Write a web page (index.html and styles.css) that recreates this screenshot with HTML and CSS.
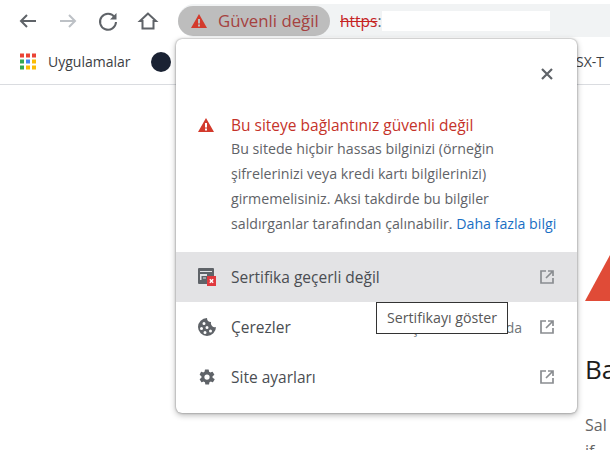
FILE: index.html
```html
<!DOCTYPE html>
<html lang="tr">
<head>
<meta charset="utf-8">
<title>Güvenli değil</title>
<link rel="stylesheet" href="styles.css">
</head>
<body>
<div class="toolbar">
  <div class="nav">
    <svg class="nav-icon" viewBox="0 0 24 24"><path class="st" d="M20 12H5M11 6l-6 6 6 6"/></svg>
    <svg class="nav-icon" viewBox="0 0 24 24"><path class="st dim" d="M4 12h15M13 6l6 6-6 6"/></svg>
    <svg class="nav-icon" viewBox="0 0 24 24"><path class="st" d="M18.600 8.200A8 8 0 1 0 20 13"/><path class="fill" d="M20.500 4v6.500H14z"/></svg>
    <svg class="nav-icon" viewBox="0 0 24 24"><path class="st" d="M12 4.500 4 12h2.500v7.500h11V12H20z"/></svg>
  </div>
  <div class="omnibox">
    <div class="chip">
      <svg class="warn" viewBox="0 0 16 14"><path class="warn-fill" fill-rule="evenodd" d="M8 0 16 14H0zM7 5v4.500h2V5zM7 10.500v2h2v-2z"/></svg>
      <span>Güvenli değil</span>
    </div>
    <div class="url"><s class="scheme">https</s><span class="colon">:</span><span class="redact"></span></div>
  </div>
</div>
<div class="bookmarks">
  <svg class="apps" viewBox="0 0 16 16">
    <rect class="r" x="0" y="0" width="4" height="4"/><rect class="r" x="6" y="0" width="4" height="4"/><rect class="r" x="12" y="0" width="4" height="4"/>
    <rect class="g" x="0" y="6" width="4" height="4"/><rect class="b" x="6" y="6" width="4" height="4"/><rect class="y" x="12" y="6" width="4" height="4"/>
    <rect class="g" x="0" y="12" width="4" height="4"/><rect class="y" x="6" y="12" width="4" height="4"/><rect class="y" x="12" y="12" width="4" height="4"/>
  </svg>
  <span class="bm-label">Uygulamalar</span>
  <span class="dot"></span>
  <span class="bm-end">SX-T</span>
</div>
<main class="page">
  <svg class="tri" viewBox="0 0 25 46"><path d="M25 0V46H0z"/></svg>
  <div class="heading">Ba</div>
  <div class="para">Sal<br>if</div>
</main>

<section class="popup">
  <div class="close-row">
    <svg class="close" viewBox="0 0 12 12"><path d="M1 1l10 10M11 1 1 11"/></svg>
  </div>
  <div class="message">
    <svg class="msg-warn" viewBox="0 0 16 14"><path class="warn-fill" fill-rule="evenodd" d="M8 0 16 14H0zM7 5v4.500h2V5zM7 10.500v2h2v-2z"/></svg>
    <div class="msg-text">
      <div class="msg-title">Bu siteye bağlantınız güvenli değil</div>
      <p class="msg-body">Bu sitede hiçbir hassas bilginizi (örneğin<br>şifrelerinizi veya kredi kartı bilgilerinizi)<br>girmemelisiniz. Aksi takdirde bu bilgiler<br>saldırganlar tarafından çalınabilir. <a class="link">Daha fazla bilgi</a></p>
    </div>
  </div>
  <div class="row hover">
    <svg class="row-icon" viewBox="0 0 18 18">
      <path class="ifill" fill-rule="evenodd" d="M1 0h14a1 1 0 0 1 1 1v15H1a1 1 0 0 1-1-1V1a1 1 0 0 1 1-1zM2 3v1h12V3zM2 6v6h1.500V8H9V6zM5 9.500v1h3v-1z"/>
      <rect class="xbox" x="9" y="8" width="9" height="10"/><path class="xmark" d="M11.800 11.300l3.400 3.400M15.200 11.300l-3.400 3.400"/>
    </svg>
    <span class="row-label">Sertifika geçerli değil</span>
    <svg class="ext" viewBox="0 0 14 14"><path d="M6 1H1v12h12V8M8 1h5v5M13 1 6 8"/></svg>
  </div>
  <div class="row">
    <svg class="row-icon" viewBox="0 0 18 18"><path class="ifill" fill-rule="evenodd" d="M9 0a4 4 0 0 0 4 4 4 4 0 0 0 5 5A9 9 0 1 1 9 0zM6 4a1.500 1.500 0 1 0 0 3 1.500 1.500 0 0 0 0-3zM3.500 9a1.500 1.500 0 1 0 0 3 1.500 1.500 0 0 0 0-3zM9 8a1.500 1.500 0 1 0 0 3 1.500 1.500 0 0 0 0-3zM12.500 11.500a1.500 1.500 0 1 0 0 3 1.500 1.500 0 0 0 0-3zM7 13a1.500 1.500 0 1 0 0 3 1.500 1.500 0 0 0 0-3z"/></svg>
    <span class="row-label">Çerezler</span>
    <span class="row-note">3 çerez kullanımda</span>
    <svg class="ext" viewBox="0 0 14 14"><path d="M6 1H1v12h12V8M8 1h5v5M13 1 6 8"/></svg>
  </div>
  <div class="row">
    <svg class="row-icon" viewBox="0 0 24 24"><path class="ifill" d="M19.400 13c.04-.32.06-.66.06-1s-.02-.68-.07-1l2.170-1.650c.2-.15.250-.43.130-.65l-2.060-3.500a.5.5 0 0 0-.63-.22l-2.560 1a7.500 7.500 0 0 0-1.720-1l-.4-2.650A.5.5 0 0 0 13.800 2H9.700a.5.5 0 0 0-.5.430l-.4 2.650c-.62.250-1.200.6-1.720 1l-2.560-1a.5.5 0 0 0-.63.220L2.330 8.800c-.13.220-.07.500.13.650L4.630 11a7.500 7.500 0 0 0 0 2l-2.170 1.650c-.2.150-.25.430-.13.650l2.060 3.500c.13.220.4.300.63.220l2.560-1c.52.400 1.100.750 1.720 1l.4 2.650c.04.250.25.430.5.430h4.100c.25 0 .46-.18.500-.43l.4-2.650a7.500 7.500 0 0 0 1.720-1l2.560 1c.23.080.5 0 .63-.22l2.060-3.500c.12-.22.070-.5-.13-.65zM12 15.500a3.500 3.500 0 1 1 0-7 3.500 3.500 0 0 1 0 7z"/></svg>
    <span class="row-label">Site ayarları</span>
    <svg class="ext" viewBox="0 0 14 14"><path d="M6 1H1v12h12V8M8 1h5v5M13 1 6 8"/></svg>
  </div>
  <div class="tooltip">Sertifikayı göster</div>
</section>
</body>
</html>
```
FILE: styles.css
```css
* { box-sizing: border-box; }
html, body { margin: 0; padding: 0; }
body {
  width: 610px;
  height: 450px;
  overflow: hidden;
  position: relative;
  background: #fff;
  font-family: "Open Sans", "Noto Sans", sans-serif;
  color: #5f6368;
}
.toolbar { height: 43px; display: flex; align-items: flex-start; padding-top: 5px; }
.nav { display: flex; gap: 16px; padding-left: 16px; padding-top: 4px; width: 178px; }
.nav-icon { width: 24px; height: 24px; }
.st { fill: none; stroke: #5f6368; stroke-width: 2; }
.st.dim { stroke: #bdc1c6; }
.fill { fill: #5f6368; }
.omnibox {
  flex: 1;
  height: 33px;
  margin-top: -1px;
  background: #f1f3f4;
  border-radius: 16px 0 0 16px;
  display: flex;
  align-items: center;
}
.chip {
  width: 152px;
  height: 30px;
  background: #bdbdbd;
  border-radius: 15px;
  display: flex;
  align-items: center;
  gap: 11px;
  padding-left: 13px;
  color: #a5413f;
  font-size: 16.800px;
  white-space: nowrap;
}
.warn { width: 16px; height: 14px; flex: none; }
.warn-fill { fill: #d33a2c; }
.url { display: flex; align-items: center; padding-left: 10px; font-size: 15.500px; }
.scheme { color: #c5221f; }
.colon { color: #5f6368; }
.redact { width: 168px; height: 20px; background: #fff; }
.bookmarks {
  height: 42px;
  border-bottom: 1px solid #dadce0;
  display: flex;
  align-items: center;
  padding: 0 0 4px 20px;
  font-size: 14px;
  color: #3c4043;
  white-space: nowrap;
}
.apps { width: 16px; height: 17px; flex: none; }
.r { fill: #ea4335; } .g { fill: #34a853; } .b { fill: #4285f4; } .y { fill: #fbbc05; }
.bm-label { margin-left: 12px; }
.dot { width: 20px; height: 20px; border-radius: 50%; background: #1a2233; margin-left: 20px; flex: none; }
.bm-end { margin-left: auto; padding-right: 6px; }
.page { padding-left: 585px; color: #222; white-space: nowrap; }
.tri { display: block; width: 25px; height: 46px; margin-top: 170px; }
.tri path { fill: #e04b37; }
.heading { margin-top: 50px; font-size: 26px; line-height: 36px; color: #1c1c1c; }
.para { margin-top: 25px; font-size: 16px; line-height: 26px; color: #666; }
.popup {
  position: absolute;
  left: 176px;
  top: 39px;
  width: 401px;
  height: 374px;
  background: #fff;
  border-radius: 6px;
  box-shadow: 0 0 2px rgba(0,0,0,.45), 0 2px 6px rgba(0,0,0,.3);
  padding-bottom: 11px;
}
.close-row { height: 70px; display: flex; justify-content: flex-end; align-items: flex-start; padding: 29px 24px 0 0; }
.close { width: 12px; height: 12px; }
.close path { fill: none; stroke: #5f6368; stroke-width: 2.200; }
.message { display: flex; height: 143px; padding-left: 22px; }
.msg-warn { width: 16px; height: 14px; margin-top: 9px; flex: none; }
.msg-text { margin-left: 17px; white-space: nowrap; }
.msg-title { color: #c5332a; font-size: 15.500px; line-height: 22px; margin-top: 5px; }
.msg-body { margin: 0; font-size: 14.200px; line-height: 25px; color: #5f6368; }
.link { color: #1a6fc4; }
.row { height: 50px; display: flex; align-items: center; padding: 0 23px 0 22px; font-size: 15.500px; color: #4a4d52; white-space: nowrap; }
.row.hover { background: #e3e3e5; }
.row-icon { width: 18px; height: 18px; flex: none; }
.ifill { fill: #5f6368; }
.xbox { fill: #e0393e; }
.xmark { stroke: #fff; stroke-width: 1.400; fill: none; }
.row-label { margin-left: 15px; }
.row-note { margin-left: auto; font-size: 14px; color: #70757a; }
.ext { width: 14px; height: 14px; flex: none; margin-left: auto; }
.row-note + .ext { margin-left: 18px; }
.ext path { fill: none; stroke: #8a8d91; stroke-width: 1.700; }
.tooltip {
  position: absolute;
  left: 200px;
  top: 263px;
  width: 132px;
  height: 32px;
  background: #fff;
  border: 1px solid #333;
  padding-left: 10px;
  font-size: 14.200px;
  line-height: 29px;
  color: #575757;
  white-space: nowrap;
}
```
